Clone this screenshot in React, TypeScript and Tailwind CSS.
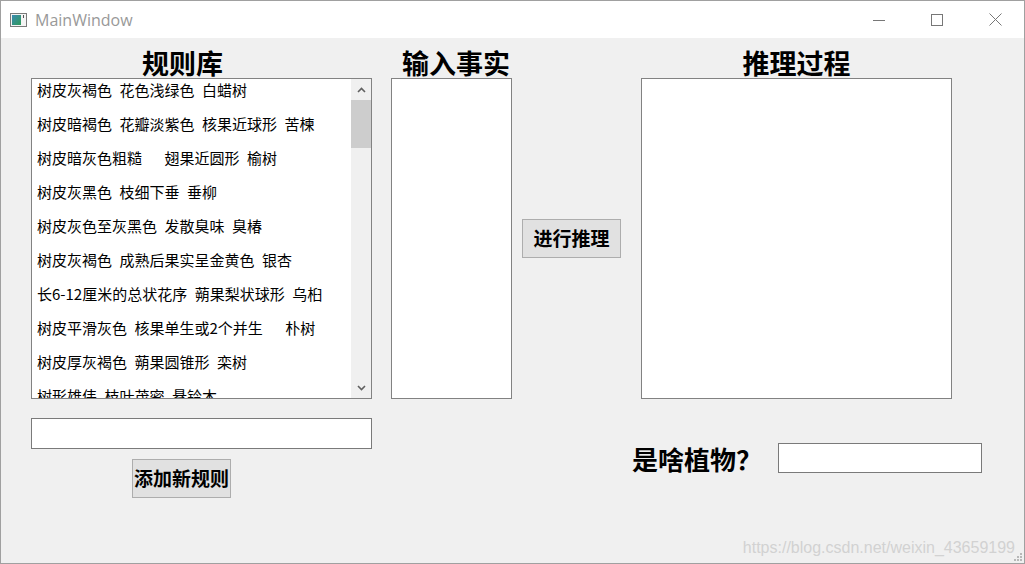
const rules = [
  "树皮灰褐色 花色浅绿色 白蜡树",
  "树皮暗褐色 花瓣淡紫色 核果近球形 苦楝",
  "树皮暗灰色粗糙   翅果近圆形 榆树",
  "树皮灰黑色 枝细下垂 垂柳",
  "树皮灰色至灰黑色 发散臭味 臭椿",
  "树皮灰褐色 成熟后果实呈金黄色 银杏",
  "长6-12厘米的总状花序 蒴果梨状球形 乌桕",
  "树皮平滑灰色 核果单生或2个并生   朴树",
  "树皮厚灰褐色 蒴果圆锥形 栾树",
  "树形雄伟 枝叶茂密 悬铃木",
];

const cjk = { fontFamily: '"Noto Sans CJK SC", sans-serif' };

function Chevron({ up }: { up?: boolean }) {
  return (
    <svg width="9" height="6" viewBox="0 0 9 6">
      <path
        d={up ? "M1 5 L4.5 1.5 L8 5" : "M1 1 L4.5 4.5 L8 1"}
        fill="none"
        stroke="#606060"
        strokeWidth="1.6"
      />
    </svg>
  );
}

function TitleBar() {
  return (
    <div className="h-[37px] bg-white flex items-center shrink-0">
      <svg width="17" height="14" viewBox="0 0 17 14" className="ml-[9px]">
        <defs>
          <linearGradient id="g" x1="0" y1="0" x2="1" y2="1">
            <stop offset="0" stopColor="#3a8ab0" />
            <stop offset="1" stopColor="#2f9a5a" />
          </linearGradient>
        </defs>
        <rect x="0.5" y="0.5" width="16" height="13" fill="#f4f4f4" stroke="#7a7a7a" />
        <rect x="2" y="2" width="9" height="10" fill="url(#g)" />
        <rect x="13" y="2" width="1" height="3" fill="#555" />
      </svg>
      <span
        className="ml-[8px] text-[16px] text-[#999999]"
        style={{ fontFamily: '"Open Sans", "Noto Sans", sans-serif' }}
      >
        MainWindow
      </span>
      <div className="ml-auto flex h-full">
        <div className="w-[58px] flex items-center justify-center">
          <svg width="12" height="12" viewBox="0 0 12 12">
            <path d="M0 6.5 H12" stroke="#777" strokeWidth="1" />
          </svg>
        </div>
        <div className="w-[58px] flex items-center justify-center">
          <svg width="12" height="12" viewBox="0 0 12 12">
            <rect x="0.5" y="0.5" width="11" height="11" fill="none" stroke="#777" />
          </svg>
        </div>
        <div className="w-[58px] flex items-center justify-center">
          <svg width="13" height="13" viewBox="0 0 13 13">
            <path d="M0.5 0.5 L12.5 12.5 M12.5 0.5 L0.5 12.5" stroke="#777" strokeWidth="1" />
          </svg>
        </div>
      </div>
    </div>
  );
}

export default function App() {
  return (
    <div className="relative w-[1025px] h-[564px] border border-[#a0a0a0] flex flex-col bg-[#f0f0f0] overflow-hidden">
      <TitleBar />
      <div className="flex-1 bg-[#f0f0f0] pl-[30px]" style={cjk}>
        {/* top row */}
        <div className="flex">
          <div className="w-[341px] flex flex-col">
            <div className="h-[40px] pt-[10px] leading-[30px] pl-[111px] text-[27px] font-semibold text-black whitespace-nowrap">
              规则库
            </div>
            <div className="h-[321px] border border-[#828282] bg-white flex">
              <div className="flex-1 overflow-hidden pl-[5px] pt-[1px]">
                {rules.map((r) => (
                  <div key={r} className="h-[34px] leading-[20px] text-[15px] text-black whitespace-pre">
                    {r.replace(/ /g, "\u2002")}
                  </div>
                ))}
              </div>
              <div className="w-[20px] bg-[#f0f0f0] flex flex-col">
                <div className="h-[21px] flex items-center justify-center">
                  <Chevron up />
                </div>
                <div className="h-[48px] bg-[#cdcdcd]" />
                <div className="flex-1" />
                <div className="h-[21px] flex items-center justify-center">
                  <Chevron />
                </div>
              </div>
            </div>
          </div>

          <div className="ml-[19px] w-[121px] flex flex-col">
            <div className="h-[40px] pt-[10px] leading-[30px] pl-[11px] text-[27px] font-semibold text-black whitespace-nowrap">
              输入事实
            </div>
            <div className="h-[321px] border border-[#828282] bg-white" />
          </div>

          <div className="ml-[10px] w-[99px] pt-[181px]">
            <button className="w-[99px] h-[39px] bg-[#e1e1e1] border border-[#adadad] text-[19px] font-semibold text-black whitespace-nowrap flex items-center justify-center">
              进行推理
            </button>
          </div>

          <div className="ml-[20px] w-[311px] flex flex-col">
            <div className="h-[40px] pt-[10px] leading-[30px] text-center text-[27px] font-semibold text-black whitespace-nowrap">
              推理过程
            </div>
            <div className="h-[321px] border border-[#828282] bg-white" />
          </div>
        </div>

        {/* bottom row */}
        <div className="flex">
          <div className="w-[341px] pt-[19px] flex flex-col">
            <div className="h-[31px] border border-[#7a7a7a] bg-white" />
            <button className="mt-[10px] ml-[101px] w-[99px] h-[39px] bg-[#e1e1e1] border border-[#adadad] text-[19px] font-semibold text-black whitespace-nowrap flex items-center justify-center">
              添加新规则
            </button>
          </div>
          <div className="ml-[260px] mt-[44px] flex items-center h-[30px]">
            <div className="w-[146px] text-[26px] font-semibold text-black whitespace-nowrap">是啥植物？</div>
            <div className="w-[204px] h-[30px] border border-[#7a7a7a] bg-white" />
          </div>
        </div>
      </div>

      <div
        className="absolute right-[9px] bottom-[6px] text-[16px] leading-[18px] text-[#d2d2d2]"
        style={{ fontFamily: '"Liberation Sans", Arial, sans-serif' }}
      >
        https://blog.csdn.net/weixin_43659199
      </div>
      <svg width="10" height="10" viewBox="0 0 10 10" className="absolute right-[1px] bottom-[1px]">
        <rect x="7" y="1" width="2" height="2" fill="#b8b8b8" />
        <rect x="4" y="4" width="2" height="2" fill="#b8b8b8" />
        <rect x="7" y="4" width="2" height="2" fill="#b8b8b8" />
        <rect x="1" y="7" width="2" height="2" fill="#b8b8b8" />
        <rect x="4" y="7" width="2" height="2" fill="#b8b8b8" />
        <rect x="7" y="7" width="2" height="2" fill="#b8b8b8" />
      </svg>
    </div>
  );
}
